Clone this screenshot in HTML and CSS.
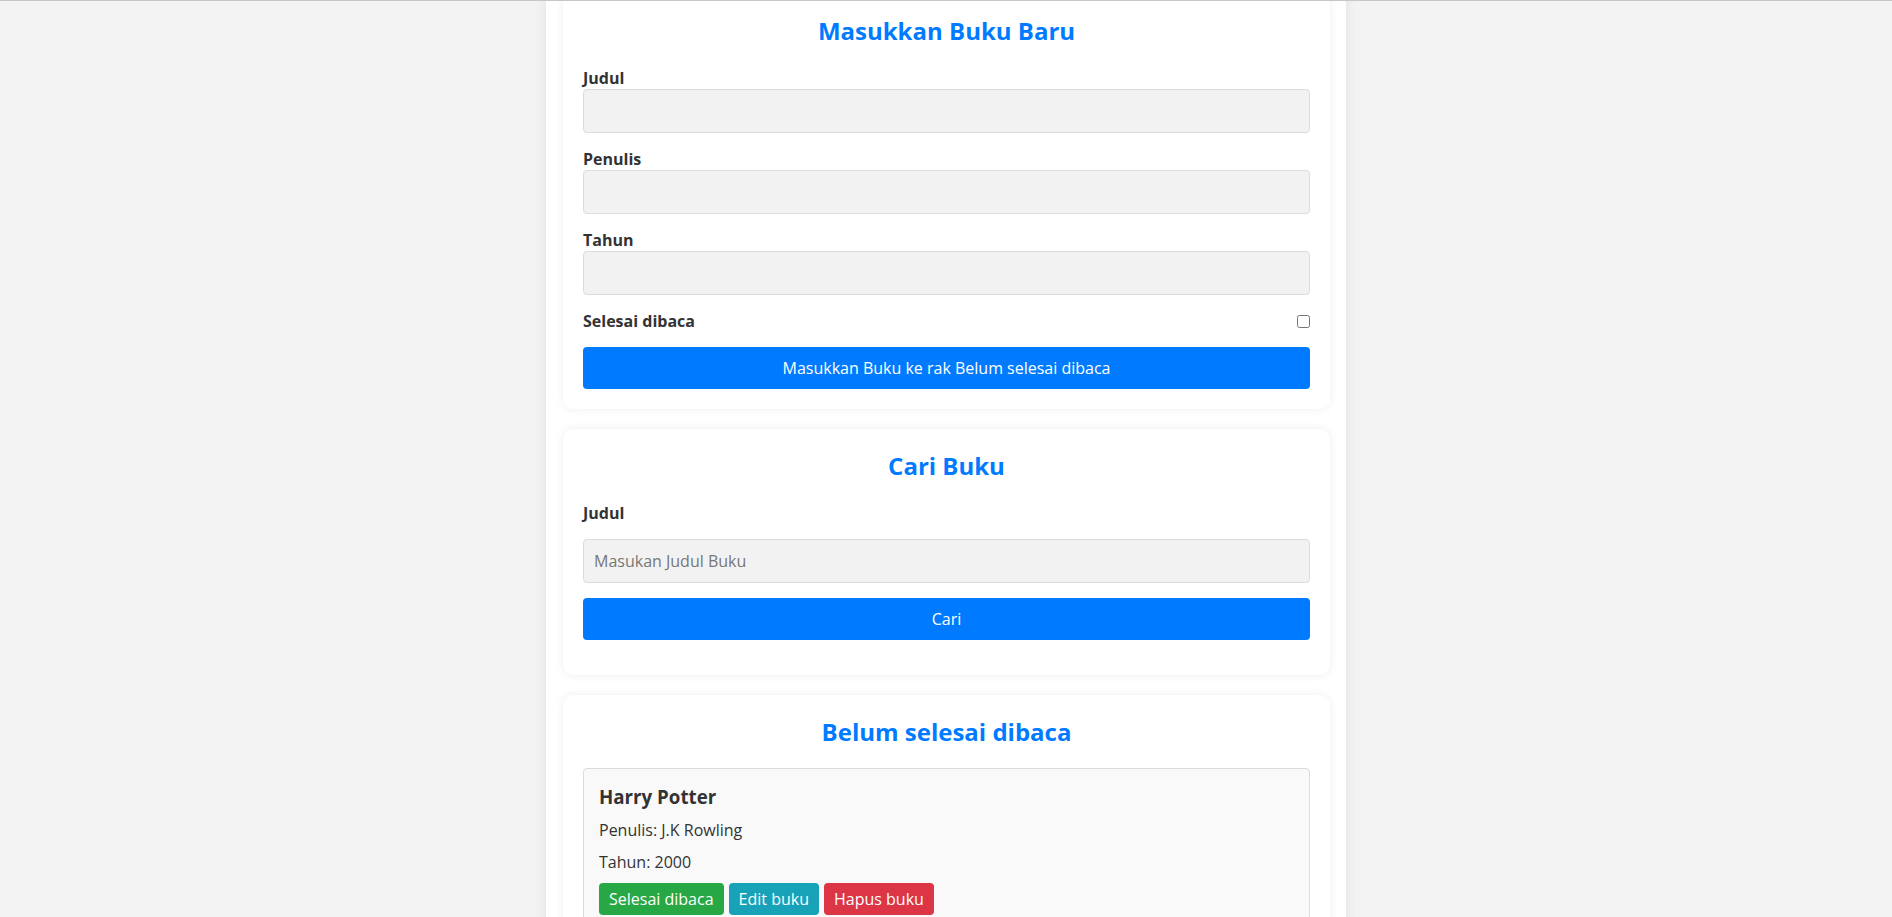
FILE: index.html
```html
<!DOCTYPE html>
<html lang="id">
<head>
<meta charset="utf-8">
<title>Bookshelf App</title>
<link rel="stylesheet" href="styles.css">
</head>
<body>
<div class="topline"></div>
<main class="container">
  <section class="card">
    <h2 class="card-title">Masukkan Buku Baru</h2>
    <form class="book-form">
      <div class="field">
        <label class="label" for="title">Judul</label>
        <input class="input" id="title" type="text">
      </div>
      <div class="field">
        <label class="label" for="author">Penulis</label>
        <input class="input" id="author" type="text">
      </div>
      <div class="field">
        <label class="label" for="year">Tahun</label>
        <input class="input" id="year" type="number">
      </div>
      <div class="field check-row">
        <label class="label" for="complete">Selesai dibaca</label>
        <input class="checkbox" id="complete" type="checkbox">
      </div>
      <button class="btn-primary" type="button">Masukkan Buku ke rak Belum selesai dibaca</button>
    </form>
  </section>

  <section class="card">
    <h2 class="card-title">Cari Buku</h2>
    <form class="search-form">
      <label class="label search-label" for="searchTitle">Judul</label>
      <input class="input" id="searchTitle" type="text" placeholder="Masukan Judul Buku">
      <button class="btn-primary search-btn" type="button">Cari</button>
    </form>
  </section>

  <section class="card">
    <h2 class="card-title">Belum selesai dibaca</h2>
    <div class="book-list">
      <article class="book-item">
        <h3 class="book-title">Harry Potter</h3>
        <p class="book-meta">Penulis: J.K Rowling</p>
        <p class="book-meta">Tahun: 2000</p>
        <div class="actions">
          <button class="btn btn-green" type="button">Selesai dibaca</button>
          <button class="btn btn-teal" type="button">Edit buku</button>
          <button class="btn btn-red" type="button">Hapus buku</button>
        </div>
      </article>
    </div>
  </section>
</main>
</body>
</html>
```

FILE: styles.css
```css
* {
  box-sizing: border-box;
}

html, body {
  margin: 0;
  padding: 0;
}

body {
  background: #f3f3f3;
  font-family: "Open Sans", "Noto Sans", sans-serif;
  font-size: 16px;
  color: #333;
  overflow: hidden;
}

.topline {
  position: fixed;
  top: 0;
  left: 0;
  right: 0;
  height: 1px;
  background: #c6c6c6;
  z-index: 10;
}

.container {
  width: 800px;
  margin: -6px auto 0;
  padding: 0 16px 40px 17px;
  background: #fff;
  box-shadow: 0 0 12px rgba(0, 0, 0, 0.08);
  min-height: 1200px;
  display: flex;
  flex-direction: column;
  gap: 20px;
}

.card {
  background: #fff;
  border-radius: 10px;
  padding: 20px;
  box-shadow: 0 0 10px rgba(0, 0, 0, 0.07);
}

.card-title {
  margin: 0 0 20px;
  text-align: center;
  color: #007bff;
  font-size: 24px;
  font-weight: 700;
}

.field {
  margin-bottom: 15px;
}

.label {
  display: block;
  font-weight: 700;
  color: #333;
}

.input {
  display: block;
  width: 100%;
  padding: 10px;
  border: 1px solid #dcdcdc;
  border-radius: 4px;
  background: #f2f2f2;
  font-family: inherit;
  font-size: 16px;
  line-height: normal;
  color: #333;
}

.input::placeholder {
  color: #777;
}

.check-row {
  display: flex;
  justify-content: space-between;
  align-items: center;
}

.checkbox {
  width: 13px;
  height: 13px;
  margin: 0;
}

.btn-primary {
  display: block;
  width: 100%;
  padding: 10px;
  border: none;
  border-radius: 4px;
  background: #007bff;
  color: #fff;
  font-family: inherit;
  font-size: 16px;
  line-height: normal;
}

.search-form {
  margin-bottom: 15px;
}

.search-label {
  margin-bottom: 15px;
}

.search-btn {
  margin-top: 15px;
}

.book-item {
  background: #f9f9f9;
  border: 1px solid #dcdcdc;
  border-radius: 4px;
  padding: 15px;
}

.book-title {
  margin: 0 0 10px;
  font-size: 18.72px;
  font-weight: 700;
  color: #333;
}

.book-meta {
  margin: 10px 0;
  color: #333;
}

.actions {
  display: flex;
  gap: 5px;
}

.btn {
  padding: 5px 10px;
  border: none;
  border-radius: 4px;
  color: #fff;
  font-family: inherit;
  font-size: 16px;
  line-height: normal;
}

.btn-green {
  background: #28a745;
}

.btn-teal {
  background: #17a2b8;
}

.btn-red {
  background: #dc3545;
}
```
